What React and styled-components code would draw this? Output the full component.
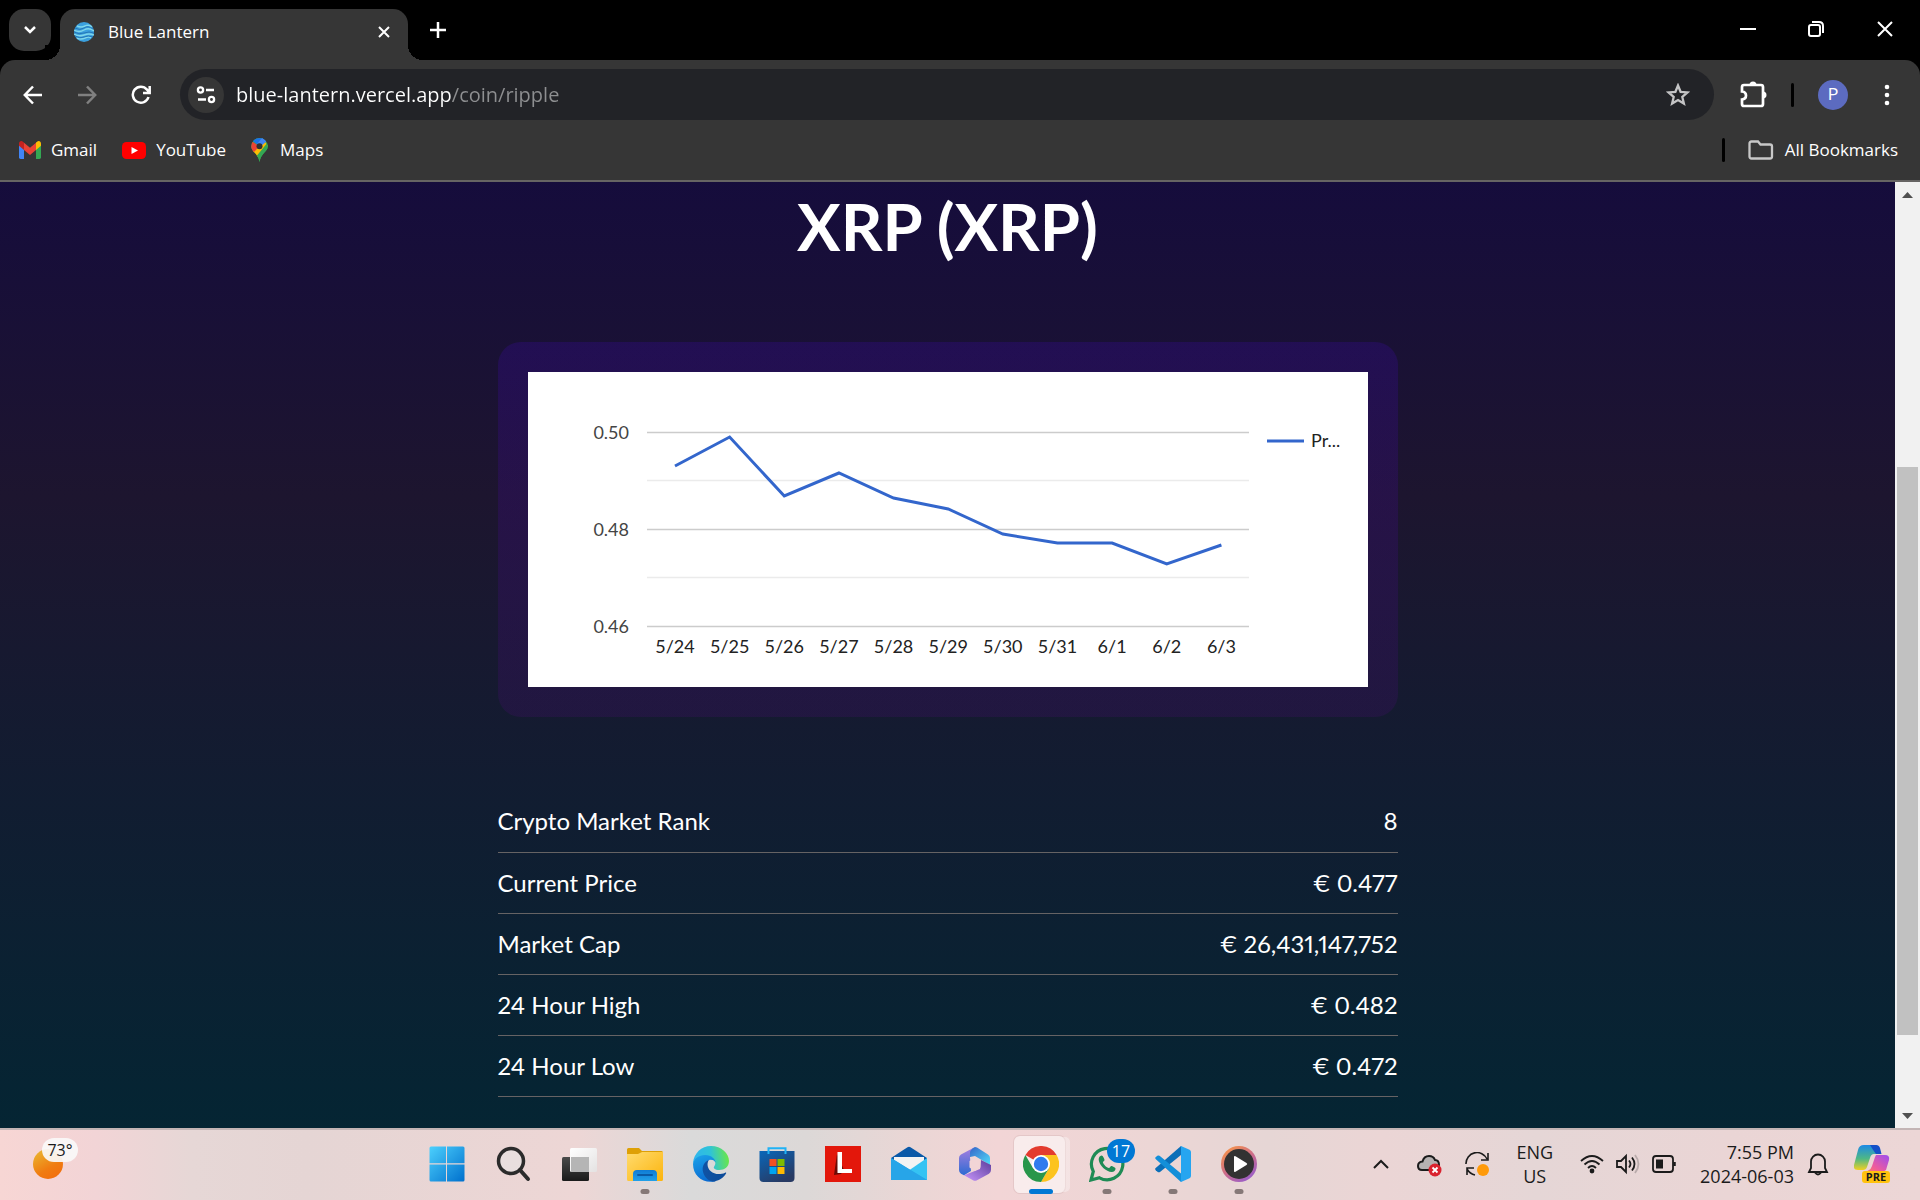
import React from 'react';
import styled, { createGlobalStyle, css } from 'styled-components';

const GlobalStyle = createGlobalStyle`
  * { box-sizing: border-box; }
  html, body, #root { height: 100%; }
  body { margin: 0; background: #000; font-family: 'Open Sans', 'Noto Sans', sans-serif; }
  button, input { font: inherit; color: inherit; border: 0; background: none; padding: 0; margin: 0; }
  a { color: inherit; text-decoration: none; }
  svg { display: block; flex: none; }
`;

const Screen = styled.div`
  display: flex;
  flex-direction: column;
  height: 100vh;
  overflow: hidden;
`;

/* ---------- browser frame ---------- */

const TabStrip = styled.header`
  display: flex;
  align-items: flex-start;
  height: 60px;
  padding: 9px 0 0 9px;
  background: #000;
  color: #fff;
`;

const TabSearch = styled.button`
  display: grid;
  place-items: center;
  width: 42px;
  height: 42px;
  border-radius: 15px;
  background: #363636;
`;

const Tab = styled.div`
  position: relative;
  display: flex;
  align-items: center;
  gap: 14px;
  width: 348px;
  height: 51px;
  margin-left: 9px;
  padding: 0 15px 6px 14px;
  border-radius: 15px 15px 0 0;
  background: #363636;
  font-size: 17px;
  line-height: 24px;

  &::before, &::after {
    content: '';
    position: absolute;
    bottom: 0;
    width: 15px;
    height: 15px;
  }
  &::before { right: 100%; background: radial-gradient(circle at 0 0, #000 15px, #363636 15px); }
  &::after { left: 100%; background: radial-gradient(circle at 100% 0, #000 15px, #363636 15px); }
`;

const TabTitle = styled.span`
  flex: 1;
`;

const PlainButton = styled.button`
  display: grid;
  place-items: center;
  width: ${p => p.$w || 18}px;
  height: ${p => p.$h || 18}px;
`;

const WindowControls = styled.div`
  display: flex;
  margin-left: auto;
`;

const Toolbar = styled.nav`
  display: flex;
  align-items: center;
  height: 60px;
  padding: 9px 6px 0 6px;
  background: #363636;
  border-radius: 15px 15px 0 0;
  color: #fff;
`;

const ChromeFrame = styled.div`
  background: #363636;
  border-bottom: 2px solid #666463;
`;

const ToolbarCorner = styled.div`
  background: #000;
`;

const Omnibox = styled.div`
  flex: 1;
  display: flex;
  align-items: center;
  height: 51px;
  margin: 0 12px;
  padding: 0 24px 0 8px;
  border-radius: 26px;
  background: #222327;
`;

const SiteInfo = styled.button`
  display: grid;
  place-items: center;
  width: 36px;
  height: 36px;
  border-radius: 50%;
  background: #363636;
`;

const Address = styled.input`
  flex: 1;
  min-width: 0;
  height: 36px;
  margin-left: 12px;
  font-size: 20px;
  outline: none;
  color: #fff;
  background: linear-gradient(90deg, #fff 215px, #8e8f91 215px);
  background-clip: text;
  -webkit-text-fill-color: transparent;
`;

const Divider = styled.span`
  width: 3px;
  height: 24px;
  border-radius: 2px;
  background: #000;
`;

const Account = styled.div`
  display: flex;
  align-items: center;
  gap: 24px;
  padding: 0 12px 0 11px;
`;

const Avatar = styled.button`
  width: 30px;
  height: 30px;
  border-radius: 50%;
  background: #5c6bc0;
  font-family: Roboto, sans-serif;
  font-size: 16px;
`;

const Bookmarks = styled.nav`
  display: flex;
  align-items: center;
  height: 60px;
  padding: 0 22px 0 19px;
  color: #fff;
  font-size: 17px;
  line-height: 24px;
`;

const Bookmark = styled.a`
  display: flex;
  align-items: center;
  gap: ${p => p.$gap || 10}px;
  margin-right: 25px;
`;

const AllBookmarks = styled.button`
  display: flex;
  align-items: center;
  gap: 11px;
  margin-left: 23px;
`;

/* ---------- page ---------- */

const Viewport = styled.div`
  flex: 1;
  min-height: 0;
  display: flex;
`;

const Page = styled.main`
  flex: 1;
  overflow: hidden;
  padding-top: 2px;
  background: linear-gradient(#0b004e, #1d152f, #002834) 0 -433px / 100% 1492px no-repeat;
  color: #fff;
  font-family: Lato, sans-serif;
`;

const Title = styled.h1`
  margin: 0 0 74px;
  font-size: 65px;
  line-height: 84px;
  font-weight: 700;
  text-align: center;
`;

const ChartCard = styled.section`
  width: 900px;
  max-width: 100%;
  margin: 0 auto 74px;
  padding: 30px;
  border-radius: 23px;
  background: linear-gradient(rgba(84, 3, 255, 0.15), rgba(105, 2, 153, 0.15));
`;

const ChartSvg = styled.svg`
  width: 100%;
  height: auto;
  background: #fff;
  font-family: Lato, sans-serif;
  font-size: 18px;
`;

const Stats = styled.table`
  width: 900px;
  max-width: 100%;
  margin: 0 auto;
  border-collapse: collapse;
  font-size: 24px;
  line-height: 30px;
  font-variant-numeric: proportional-nums;

  th, td {
    height: 61px;
    padding: 0;
    border-bottom: 1px solid #666364;
    font-weight: 400;
    text-align: left;
  }
  td { text-align: right; }
`;

const Scrollbar = styled.div`
  display: flex;
  flex-direction: column;
  width: 25px;
  background: #f1f1f1;
`;

const ScrollTrack = styled.div`
  flex: 1;
  padding: 0 2px;
  display: grid;
  grid-template-rows: 260fr 568fr 68fr;
`;

const ScrollThumb = styled.div`
  grid-row: 2;
  background: #c1c1c1;
`;

/* ---------- taskbar ---------- */

const TaskbarRoot = styled.footer`
  display: grid;
  grid-template-columns: 7fr auto 11fr;
  height: 72px;
  border-top: 2px solid #c3b5b5;
  background: linear-gradient(90deg, #f7d6d4 0, #f2d4d6 5%, #e6d7d6 10%, #e5d5d4 16%, #edd6d5 30%, #dadada 36%, #dcd8d7 42%, #ebd6d5 48%, #f2d5d6 52%, #ecd6d5 60%, #e6d6d5 66%, #ebd5d5 72%, #e5d6d6 80%, #ead5d5 90%, #ecd6d6 100%);
  color: #1b1b1b;
  font-size: 18px;
  line-height: 24px;
`;

const Weather = styled.button`
  position: relative;
  width: 60px;
  height: 60px;
  margin-left: 24px;
`;

const Sun = styled.span`
  position: absolute;
  left: 9px;
  top: 19px;
  width: 30px;
  height: 30px;
  border-radius: 50%;
  background: linear-gradient(150deg, #e9bd35, #f07c11 60%, #f36a0c);
`;

const Temp = styled.span`
  position: absolute;
  left: 18px;
  top: 8px;
  width: 36px;
  height: 24px;
  border-radius: 12px;
  background: rgba(250, 248, 248, 0.92);
  font-size: 16px;
  line-height: 24px;
`;

const Apps = styled.div`
  display: flex;
  gap: 6px;
  padding: 5px 2px 0 4px;
`;

const AppButton = styled.button`
  position: relative;
  display: grid;
  place-items: center;
  width: 60px;
  height: 58px;

  ${p => p.$active && css`
    &::before {
      content: '';
      position: absolute;
      left: 3px;
      top: 1px;
      width: 51px;
      height: 57px;
      border-radius: 6px;
      background: rgba(255, 255, 255, 0.55);
      box-shadow: 6px 0 0 -1px rgba(255, 255, 255, 0.35), 0 0 0 1px rgba(190, 160, 160, 0.25);
    }
  `}

  ${p => p.$running && css`
    &::after {
      content: '';
      position: absolute;
      left: 50%;
      bottom: -1px;
      width: ${p.$active ? 24 : 9}px;
      height: 5px;
      border-radius: 3px;
      transform: translateX(-50%);
      background: ${p.$active ? '#0078d4' : '#857877'};
    }
  `}

  svg { position: relative; }
`;

const Badge = styled.span`
  position: absolute;
  right: 2px;
  top: 4px;
  width: 28px;
  height: 24px;
  border-radius: 12px;
  background: #0078d4;
  color: #fff;
  font-size: 16px;
  line-height: 24px;
`;

const Tray = styled.div`
  display: flex;
  align-items: center;
  justify-content: flex-end;
  padding: 0 30px 3px 0;
`;

const TrayButton = styled.button`
  display: grid;
  place-items: center;
  height: 60px;
  padding: ${p => p.$pad || '0'};
  text-align: ${p => p.$align || 'center'};
  white-space: nowrap;
`;

/* ---------- icons ---------- */

const Line = ({ w = 24, h = w, vb, sw = 2, children, color = 'currentColor' }) => (
  <svg width={w} height={h} viewBox={vb || `0 0 ${w} ${h}`} fill="none" stroke={color} strokeWidth={sw} aria-hidden="true">
    {children}
  </svg>
);

const Favicon = () => (
  <svg width="20" height="20" viewBox="0 0 20 20" aria-hidden="true">
    <circle cx="10" cy="10" r="10" fill="#3ba0de" />
    <g fill="none" stroke="#7fd6ea" strokeWidth="1.4">
      <path d="M3 4q4 2 8 0t7 1" /><path d="M0 8q5 3 10 0t10 1" />
      <path d="M0 12q5 3 10 1t10 0" /><path d="M3 16q4 2 8 0t6 0" />
    </g>
    <g fill="none" stroke="#2477b8" strokeWidth="1"><path d="M1 6q5 3 9 0t9 1" /><path d="M0 10q5 3 10 1t10 0" /><path d="M1 14q5 3 9 1t9 0" /></g>
  </svg>
);

const Gmail = () => (
  <svg width="22" height="18" viewBox="0 0 22 16" preserveAspectRatio="none" aria-hidden="true">
    <path d="M0 2v12.500Q0 16 1.500 16H5V6z" fill="#4285f4" />
    <path d="M22 2v12.500Q22 16 20.500 16H17V6z" fill="#34a853" />
    <path d="M5 1.500 11 6l6-4.500V8l-6 4.500L5 8z" fill="#ea4335" />
    <path d="M0 2.500C0 0 2.500-.7 4.200.8L5 1.400V8L0 4.200z" fill="#c5221f" />
    <path d="M22 2.500C22 0 19.500-.7 17.800.8l-.8.6V8l5-3.800z" fill="#fbbc04" />
  </svg>
);

const YouTube = () => (
  <svg width="24" height="17" viewBox="0 0 24 17" aria-hidden="true">
    <rect width="24" height="17" rx="4.500" fill="#f00" />
    <path d="M9.500 5v7l6.500-3.500z" fill="#fff" />
  </svg>
);

const Maps = () => (
  <svg width="17" height="24" viewBox="0 0 17 24" aria-hidden="true">
    <clipPath id="pin"><path d="M8.500 0A8.300 8.300 0 0 0 .2 8.300C.2 14 7 15 8.500 24 10 15 16.800 14 16.800 8.300A8.300 8.300 0 0 0 8.500 0z" /></clipPath>
    <g clipPath="url(#pin)">
      <path d="M0 0h17v24H0z" fill="#34a853" />
      <path d="M0 14.500 12 1 17 8 5 20z" fill="#fbbc04" />
      <path d="M17 4 4 20l4 4h9z" fill="#34a853" />
      <path d="M0 3l8.500 5.300L0 17z" fill="#ea4335" />
      <path d="M1 2.500 8.500 8.300 14.500 2V0H1z" fill="#1a73e8" />
      <path d="M11 0 6 6l3 3 7-6V0z" fill="#4285f4" />
    </g>
    <circle cx="8.500" cy="8.300" r="3" fill="#303134" />
  </svg>
);

const WindowsLogo = () => (
  <svg width="36" height="36" viewBox="0 0 36 36" aria-hidden="true">
    <linearGradient id="win" x1="0" y1="0" x2="1" y2="1"><stop stopColor="#4cd0fd" /><stop offset="1" stopColor="#0070cd" /></linearGradient>
    <path fill="url(#win)" d="M2 .5h15v16.700H.5V2Q.5.500 2 .5zM18 .5h16q1.500 0 1.500 1.500v15.200H18zM.5 18.500H17v17H2Q.5 35.500.5 34zM18 18.500h17.500V34q0 1.500-1.500 1.500H18z" />
  </svg>
);

const SearchIcon = () => (
  <Line w={36} sw={3.500} color="#2b2b2b">
    <circle cx="16" cy="15" r="12.500" fill="#e6e4e4" fillOpacity=".6" />
    <path d="m25 24 8 9" strokeWidth="4" strokeLinecap="round" />
  </Line>
);

const TaskView = () => (
  <svg width="36" height="36" viewBox="0 0 36 36" aria-hidden="true">
    <linearGradient id="tv" x2="0" y2="1"><stop stopColor="#4a4a4a" /><stop offset="1" stopColor="#1a1a1a" /></linearGradient>
    <linearGradient id="tw" x2="1" y2="1"><stop stopColor="#fff" /><stop offset="1" stopColor="#e4e2e2" /></linearGradient>
    <rect x="1" y="11" width="27" height="24" rx="1.500" fill="url(#tv)" />
    <rect x="9" y="2" width="27" height="24" rx="1.500" fill="url(#tw)" />
    <path d="M10 11h18v15H10z" fill="#b5b5b5" />
  </svg>
);

const Explorer = () => (
  <svg width="36" height="36" viewBox="0 0 36 36" aria-hidden="true">
    <linearGradient id="fo" x2="1" y2="1"><stop stopColor="#ffdb6e" /><stop offset="1" stopColor="#fcb40d" /></linearGradient>
    <linearGradient id="fb" x2="0" y2="1"><stop stopColor="#0f7bd4" /><stop offset="1" stopColor="#22a0e8" /></linearGradient>
    <path d="M0 3.500Q0 2 1.500 2H12l3 3h19.500Q36 5 36 6.500V12H0z" fill="#dea006" />
    <path d="M0 8h11l4-2h21v27.500Q36 35 34.500 35h-33Q0 35 0 33.500z" fill="url(#fo)" />
    <path d="M6 35v-7q0-4 4-4h16q4 0 4 4v7z" fill="url(#fb)" />
    <path d="M11 29h14" stroke="#0a5aa5" strokeWidth="2" strokeLinecap="round" />
  </svg>
);

const Edge = () => (
  <svg width="36" height="36" viewBox="0 0 24 24" aria-hidden="true">
    <linearGradient id="ea" x1="0" y1=".5" x2="1" y2=".4"><stop stopColor="#2fb4ef" /><stop offset=".5" stopColor="#2fc3d8" /><stop offset="1" stopColor="#6be843" /></linearGradient>
    <linearGradient id="eb" x1=".2" y1="0" x2=".5" y2="1"><stop stopColor="#1ba0e8" /><stop offset="1" stopColor="#0a6bd1" /></linearGradient>
    <linearGradient id="ec" x2="1" y2="0"><stop stopColor="#1053a5" /><stop offset="1" stopColor="#0c4a98" /></linearGradient>
    <path d="M0 11.500C.5 4.800 5.600 0 12 0c7 0 12 5 12 10 0 4-3 6-6.500 6-3 0-4.300-1.200-3.300-2.500 1.500-2 .5-4.500-2.200-4.500C7 7 2 8 0 11.500z" fill="url(#ea)" />
    <path d="M0 12C.5 8.500 4 6 8 6c4.500 0 7 3 7 5-1-2-3-2-4.500-1.500C8 10.500 7 13 7.500 16c.6 4 4 7 7.500 7.500C7 25.500 0 20 0 12z" fill="url(#eb)" />
    <path d="M10.500 9.400c-4 1.600-5 6-3.200 9.600C9 22.500 12 24 14.500 23.600c3.300-.6 6-2.600 7.500-5.200.3-.6 0-.9-.6-.6-6 2.700-11.600-.8-11.700-5.300 0-1.400.4-2.300.8-3.100z" fill="url(#ec)" />
  </svg>
);

const Store = () => (
  <svg width="36" height="36" viewBox="0 0 36 36" aria-hidden="true">
    <linearGradient id="st" x2=".6" y2="1"><stop stopColor="#0967ba" /><stop offset="1" stopColor="#283a63" /></linearGradient>
    <path d="M.5 5h35v27q0 4-4 4h-27q-4 0-4-4z" fill="url(#st)" />
    <path d="M9.500 8V2.200h17V8" fill="none" stroke="#20b2f5" strokeWidth="2" />
    <path fill="#f25022" d="M10.500 13h7v7h-7z" /><path fill="#7fba00" d="M18.500 13h7v7h-7z" />
    <path fill="#00a4ef" d="M10.500 21h7v7h-7z" /><path fill="#ffb900" d="M18.500 21h7v7h-7z" />
  </svg>
);

const LIcon = () => (
  <svg width="36" height="36" viewBox="0 0 36 36" aria-hidden="true">
    <path fill="#e3170b" d="M0 0h36v36H0z" />
    <path fill="#6d0a05" d="m12 8-3 21 7-1 3-4z" />
    <path fill="#fff" d="M12.500 6h4.500v17h10v4H12.500z" />
  </svg>
);

const Mail = () => (
  <svg width="36" height="36" viewBox="0 0 36 36" aria-hidden="true">
    <path d="M0 12 16.500 1.200q1.500-.8 3 0L36 12v6H0z" fill="#0a59a8" />
    <path d="M3 11h30v10L18 30 3 21z" fill="#f3f3f3" />
    <path d="M36 12v22H4z" fill="#35c3f3" />
    <path d="M0 12l36 22H0z" fill="#28a8ea" />
    <path d="M16 22 36 34H0V12z" fill="#27a5e8" />
  </svg>
);

const M365 = () => (
  <svg width="36" height="36" viewBox="0 0 36 36" aria-hidden="true">
    <linearGradient id="ma" x2="0" y2="1"><stop stopColor="#a97fe0" /><stop offset="1" stopColor="#2d6bd2" /></linearGradient>
    <linearGradient id="mb" x2="1" y2="1"><stop stopColor="#3565c9" /><stop offset="1" stopColor="#51dcfa" /></linearGradient>
    <linearGradient id="mc" x1="1" x2="0" y2="1"><stop stopColor="#5b3c9c" /><stop offset="1" stopColor="#c997fb" /></linearGradient>
    <path d="M18 1 4 8.500Q2 9.700 2 12v12q0 2.500 2 3.700l3 1.600 7-4.300-1-14Z" fill="url(#ma)" />
    <path d="M18 1q-6 2-5 10l5-1 15 9v-7q0-2.300-2-3.500L20 1.500Q19 1 18 1z" fill="url(#mb)" />
    <path d="M34 19 24 14l-1 9-16 6.300 9 5q2 1 4 0l12-6.500q2-1.200 2-3.700z" fill="url(#mc)" />
    <path d="m18 12 5.500 3v6.500L18 25l-5.500-3.500V15z" fill="#f2d5d6" />
  </svg>
);

const Chrome = () => (
  <svg width="36" height="36" viewBox="0 0 36 36" aria-hidden="true">
    <path d="M18 18 2.400 9A18 18 0 0 1 33.600 9z" fill="#e33b2e" />
    <path d="M18 9h15.600A18 18 0 0 1 18 36l7.800-13.500z" fill="#fcc31e" />
    <path d="M10.200 22.500 2.400 9A18 18 0 0 0 18 36l7.800-13.500z" fill="#28964a" />
    <circle cx="18" cy="18" r="9" fill="#fff" />
    <circle cx="18" cy="18" r="7.200" fill="#2f7bee" />
  </svg>
);

const WhatsApp = () => (
  <svg width="36" height="36" viewBox="0 0 36 36" fill="none" aria-hidden="true">
    <path d="M2 34 4.300 25.500A15.700 15.700 0 1 1 10.500 31.800z" stroke="#1f8b55" strokeWidth="3.200" />
    <path d="M12.500 9.500c-1.500.2-3 2-2.800 4.200.4 5.300 7.500 12.300 13 12.300 2.300 0 4-1.800 3.800-3.600-.1-.7-3.500-2.400-4.200-2.300-.8 0-1.600 2.200-2.400 2-2.300-.6-5.200-3.600-6-5.700-.2-.8 1.600-1.600 1.600-2.500 0-.6-1.500-4.500-3-4.400z" fill="#1f8b55" />
  </svg>
);

const VSCode = () => (
  <svg width="36" height="36" viewBox="0 0 36 36" aria-hidden="true">
    <path d="M26 9 5.300 25.800q-1.300 1-2.600.2l-2-1.700q-1.200-1.200 0-2.400L26 0l2 5z" fill="#0b6fb8" />
    <path d="M26 27.500 5.500 10.500Q4 9 2.800 9.600L.8 11q-1 1-.2 2L26 36l2-4z" fill="#138fd9" />
    <path d="M26 0 34.500 3.800Q36 4.500 36 6v24q0 1.500-1.500 2.200L26 36z" fill="#26a5f0" />
  </svg>
);

const Media = () => (
  <svg width="36" height="36" viewBox="0 0 36 36" aria-hidden="true">
    <linearGradient id="mp" x2=".7" y2="1"><stop stopColor="#ff9a3a" /><stop offset=".6" stopColor="#c96a8f" /><stop offset="1" stopColor="#9a5ec9" /></linearGradient>
    <circle cx="18" cy="18" r="18" fill="url(#mp)" />
    <circle cx="18" cy="18" r="15" fill="#323232" />
    <path d="M13 11q0-1.500 1.500-.8L25.500 17q1.500 1 0 2l-11 6.800Q13 26.500 13 25z" fill="#fff" />
  </svg>
);

const Copilot = () => (
  <svg width="36" height="39" viewBox="0 0 36 39" aria-hidden="true">
    <linearGradient id="ca" x2="0" y2="1"><stop stopColor="#1d8ae6" /><stop offset=".55" stopColor="#4fb884" /><stop offset="1" stopColor="#f1d022" /></linearGradient>
    <linearGradient id="cb" x1="1" x2="0" y2="1"><stop stopColor="#9b4cf0" /><stop offset=".6" stopColor="#ef5c9c" /><stop offset="1" stopColor="#ff8a4a" /></linearGradient>
    <path d="M10 1h11q3 0 4 3l2 6h-7q-3 0-4 4l-3 9q-1 3-4 3H4q-5 0-4-5L4 6q1-5 6-5z" fill="url(#ca)" />
    <path d="M16 1h6q3 0 4 3l1.500 6H22q-3-4-6-9z" fill="#1450c8" />
    <path d="M22 11h9q5 0 4 5l-3 10-6 4H9l6-4q2-1 3-4l3-9z" fill="url(#cb)" />
    <rect x="8" y="27" width="28" height="12" rx="3" fill="#ffc20e" />
    <text x="22" y="37" textAnchor="middle" fontSize="11" fontWeight="700" fill="#1b1b1b">PRE</text>
  </svg>
);

/* ---------- data ---------- */

const prices = [
  ['5/24', 94], ['5/25', 65], ['5/26', 124], ['5/27', 101], ['5/28', 126], ['5/29', 137],
  ['5/30', 162], ['5/31', 171], ['6/1', 171], ['6/2', 192], ['6/3', 173],
].map(([day, y], i) => ({ day, y, x: 147 + i * 54.64 }));

const stats = [
  ['Crypto Market Rank', '8'],
  ['Current Price', '€ 0.477'],
  ['Market Cap', '€ 26,431,147,752'],
  ['24 Hour High', '€ 0.482'],
  ['24 Hour Low', '€ 0.472'],
];

const apps = [
  { name: 'Start', Icon: WindowsLogo },
  { name: 'Search', Icon: SearchIcon },
  { name: 'Task view', Icon: TaskView },
  { name: 'File Explorer', Icon: Explorer, running: true },
  { name: 'Edge', Icon: Edge },
  { name: 'Store', Icon: Store },
  { name: 'L', Icon: LIcon },
  { name: 'Mail', Icon: Mail },
  { name: 'Microsoft 365', Icon: M365 },
  { name: 'Chrome', Icon: Chrome, running: true, active: true },
  { name: 'WhatsApp', Icon: WhatsApp, running: true, badge: 17 },
  { name: 'VS Code', Icon: VSCode, running: true },
  { name: 'Media Player', Icon: Media, running: true },
];

const PriceChart = () => (
  <ChartSvg viewBox="0 0 840 315" role="img">
    {[108, 205].map(y => <path key={y} d={`M119 ${y + 0.5}h602`} stroke="#ebebeb" strokeWidth="1.500" />)}
    {[['0.50', 60], ['0.48', 157], ['0.46', 254]].map(([label, y]) => (
      <g key={label}>
        <path d={`M119 ${y + 0.5}h602`} stroke="#ccc" strokeWidth="1.500" />
        <text x="101" y={y + 7} textAnchor="end" fill="#444">{label}</text>
      </g>
    ))}
    {prices.map(p => <text key={p.day} x={p.x} y="281" textAnchor="middle" fill="#222">{p.day}</text>)}
    <polyline points={prices.map(p => `${p.x},${p.y}`).join(' ')} fill="none" stroke="#3366cc" strokeWidth="3" />
    <path d="M739 69h37" stroke="#3366cc" strokeWidth="3" />
    <text x="783" y="75" fill="#222">Pr...</text>
  </ChartSvg>
);

export default function App() {
  return (
    <Screen>
      <GlobalStyle />
      <TabStrip>
        <TabSearch aria-label="Search tabs"><Line w={14} sw={2.500}><path d="m2 4 5 5 5-5" /></Line></TabSearch>
        <Tab>
          <Favicon />
          <TabTitle>Blue Lantern</TabTitle>
          <PlainButton aria-label="Close tab"><Line w={12}><path d="m1 1 10 10M11 1 1 11" /></Line></PlainButton>
        </Tab>
        <PlainButton $w={60} $h={42} aria-label="New tab"><Line w={16} sw={2.500}><path d="M8 0v16M0 8h16" /></Line></PlainButton>
        <WindowControls>
          <PlainButton $w={68} $h={40} aria-label="Minimize"><Line w={16}><path d="M0 8h16" /></Line></PlainButton>
          <PlainButton $w={68} $h={40} aria-label="Restore">
            <Line w={16}><rect x="1" y="4" width="11" height="11" rx="2" /><path d="M4 1h7q4 0 4 4v7" /></Line>
          </PlainButton>
          <PlainButton $w={70} $h={40} aria-label="Close"><Line w={16}><path d="m1 1 14 14M15 1 1 15" /></Line></PlainButton>
        </WindowControls>
      </TabStrip>

      <ChromeFrame>
        <ToolbarCorner>
          <Toolbar>
            <PlainButton $w={54} $h={42} aria-label="Back"><Line w={20} sw={2.500}><path d="M19 10H2M10 1.500 1.800 10l8.200 8.500" /></Line></PlainButton>
            <PlainButton $w={54} $h={42} aria-label="Forward"><Line w={20} sw={2.500} color="#808080"><path d="M1 10h17M10 1.500l8.200 8.500-8.200 8.500" /></Line></PlainButton>
            <PlainButton $w={54} $h={42} aria-label="Reload"><Line w={20} sw={2.500}><path d="M17.500 12A8 8 0 1 1 16 4.600L18 7M18.700 1v7H12" /></Line></PlainButton>
            <Omnibox>
              <SiteInfo aria-label="Site information">
                <Line w={20} sw={2.300}><circle cx="4.500" cy="5" r="2.600" /><path d="M10 5h8M2 14.500h8" /><circle cx="15.500" cy="14.500" r="2.600" /></Line>
              </SiteInfo>
              <Address aria-label="Address" defaultValue="blue-lantern.vercel.app/coin/ripple" />
              <PlainButton $w={24} $h={24} aria-label="Bookmark this page">
                <Line w={24} color="#c4c4c5" sw={2.300}><path d="m12 2.500 2.600 6.300 6.900.6-5.200 4.500 1.600 6.700L12 17l-5.900 3.600 1.600-6.700-5.200-4.500 6.900-.6z" /></Line>
              </PlainButton>
            </Omnibox>
            <PlainButton $w={54} $h={42} aria-label="Extensions">
              <Line w={28} sw={2.700}>
                <path d="M3.500 6.500Q3.500 4.500 5.500 4.500h17q2 0 2 2v17q0 2-2 2h-17q-2 0-2-2V19q4-.5 4-4t-4-4z" transform="translate(-.5 -.5)" />
                <path d="M10.500 4a3.500 3.500 0 0 1 7 0zM24 10.500a3.500 3.500 0 0 1 0 7z" fill="currentColor" stroke="none" />
              </Line>
            </PlainButton>
            <Account>
              <Divider />
              <Avatar>P</Avatar>
            </Account>
            <PlainButton $w={54} $h={42} aria-label="Menu">
              <svg width="6" height="22" viewBox="0 0 6 22" fill="currentColor"><circle cx="3" cy="3" r="2.300" /><circle cx="3" cy="11" r="2.300" /><circle cx="3" cy="19" r="2.300" /></svg>
            </PlainButton>
          </Toolbar>
        </ToolbarCorner>
        <Bookmarks>
          <Bookmark href="#gmail"><Gmail />Gmail</Bookmark>
          <Bookmark href="#youtube"><YouTube />YouTube</Bookmark>
          <Bookmark href="#maps" $gap={12}><Maps />Maps</Bookmark>
          <WindowControls><Divider /></WindowControls>
          <AllBookmarks>
            <Line w={26} h={20} color="#c8c8c8" sw={2.300}><path d="M1.500 3.500q0-2 2-2H10l2.500 3H22q2 0 2 2v10q0 2-2 2H3.500q-2 0-2-2z" /></Line>
            All Bookmarks
          </AllBookmarks>
        </Bookmarks>
      </ChromeFrame>

      <Viewport>
        <Page>
          <Title>XRP (XRP)</Title>
          <ChartCard><PriceChart /></ChartCard>
          <Stats>
            <tbody>
              {stats.map(([label, value]) => (
                <tr key={label}><th scope="row">{label}</th><td>{value}</td></tr>
              ))}
            </tbody>
          </Stats>
        </Page>
        <Scrollbar>
          <PlainButton $w={25} $h={25} aria-label="Scroll up"><svg width="11" height="6" viewBox="0 0 11 6"><path d="M0 6h11L5.500 0z" fill="#505050" /></svg></PlainButton>
          <ScrollTrack><ScrollThumb /></ScrollTrack>
          <PlainButton $w={25} $h={25} aria-label="Scroll down"><svg width="11" height="6" viewBox="0 0 11 6"><path d="M0 0h11L5.500 6z" fill="#505050" /></svg></PlainButton>
        </Scrollbar>
      </Viewport>

      <TaskbarRoot>
        <Weather><Sun /><Temp>73°</Temp></Weather>
        <Apps>
          {apps.map(({ name, Icon, running, active, badge }) => (
            <AppButton key={name} aria-label={name} $running={running} $active={active}>
              <Icon />
              {badge && <Badge>{badge}</Badge>}
            </AppButton>
          ))}
        </Apps>
        <Tray>
          <TrayButton $pad="0 15px" aria-label="Show hidden icons"><Line w={16} h={10}><path d="m1 9 7-7 7 7" /></Line></TrayButton>
          <TrayButton $pad="0 12px" aria-label="OneDrive">
            <Line w={26} sw={2} color="#1b1b1b">
              <path d="M6 19q-4 0-4-4t4.500-4.500Q8 5 13 5q4.500 0 6 4 4 0 4 5t-4 5z" fill="#b5b1b1" />
              <circle cx="19" cy="19" r="6.500" fill="#d9222e" stroke="none" />
              <path d="m16.500 16.500 5 5m0-5-5 5" stroke="#fff" strokeWidth="1.800" />
            </Line>
          </TrayButton>
          <TrayButton $pad="0 11px" aria-label="Updates">
            <Line w={24} sw={1.600}>
              <path d="M1 12A11 11 0 0 1 22 7M23 1v7h-7M2 23v-7h7M2 17q3 5 8 6" />
              <circle cx="18" cy="18" r="6" fill="#ff9a0a" stroke="none" />
            </Line>
          </TrayButton>
          <TrayButton $pad="0 16px">ENG<br />US</TrayButton>
          <TrayButton $pad="0 24px 0 11px" aria-label="Wi-Fi, volume and battery">
            <Line w={96} h={24} sw={1.800}>
              <path d="M1 9q11-10 22 0M4.500 12.500q7.500-7 15 0M8 16q4-4 8 0" />
              <circle cx="12" cy="19" r="1.500" fill="currentColor" />
              <path d="M37 9h4l5-5v16l-5-5h-4zM49 8.500q3 3.500 0 7M52 5.500q5 6.500 0 13" />
              <path d="M55 3q7 9 0 18" stroke="#b9abab" />
              <rect x="73" y="4" width="20" height="16" rx="3" />
              <path d="M76 7.500h7v9h-7z" fill="currentColor" stroke="none" />
              <path d="M94.500 10v4" strokeWidth="2.500" />
            </Line>
          </TrayButton>
          <TrayButton $align="right">7:55 PM<br />2024-06-03</TrayButton>
          <TrayButton $pad="0 25px 0 13px" aria-label="Notifications">
            <Line w={22} h={24} sw={1.800}><path d="M3 18 4 16V9.500a7 7 0 0 1 14 0V16l2 4H2zM8 20.500q3 4 6 0" /></Line>
          </TrayButton>
          <TrayButton aria-label="Copilot"><Copilot /></TrayButton>
        </Tray>
      </TaskbarRoot>
    </Screen>
  );
}
